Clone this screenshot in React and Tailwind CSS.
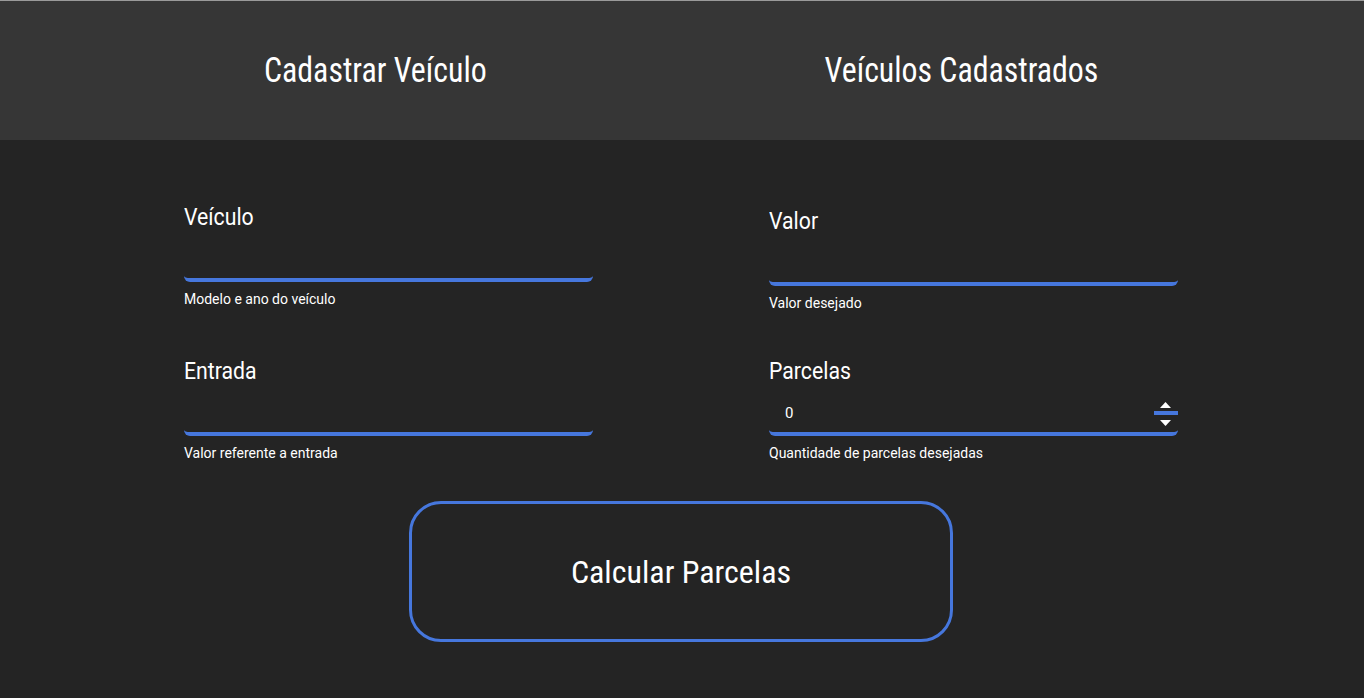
import { useState } from 'react';

const cond = { fontFamily: '"Roboto Condensed", Roboto, "Liberation Sans", sans-serif' };

function Field({ label, helper, value, number, className = '' }) {
  return (
    <div className={`flex flex-col ${className}`}>
      <label className="block text-[24px] leading-[28px] text-white font-[Roboto,sans-serif]">
        <span className="inline-block origin-left scale-x-[0.885]">{label}</span>
      </label>
      <div className="relative h-[51px] rounded-md border-b-4 border-[#4677dd]">
        {number && (
          <>
            <span className="absolute left-4 top-[20px] text-[15px] leading-[16px] text-white font-[Roboto,sans-serif]">{value}</span>
            <svg className="absolute right-0 top-[17px]" width="25" height="26" viewBox="0 0 25 26">
              <path d="M7 6 L12.5 0 L18 6 Z" fill="#fff" />
              <rect x="1" y="9" width="24" height="4" fill="#4677dd" />
              <path d="M7 18 L18 18 L12.5 24 Z" fill="#fff" />
            </svg>
          </>
        )}
      </div>
      <span className="mt-[9px] text-[14px] leading-[16px] text-white font-[Roboto,sans-serif]">{helper}</span>
    </div>
  );
}

export default function App() {
  const [parcelas] = useState(0);

  return (
    <div className="min-h-screen bg-[#242424]">
      <header className="flex h-[140px] items-center border-t border-[#9a9a9a] bg-[#363636] pl-[82px] pt-[2px]">
        <div className="flex w-[586px] justify-center">
          <h1 className="inline-block scale-x-[0.91] text-[35px] text-white" style={cond}>Cadastrar Veículo</h1>
        </div>
        <div className="flex w-[586px] justify-center">
          <h1 className="inline-block scale-x-[0.91] text-[35px] text-white" style={cond}>Veículos Cadastrados</h1>
        </div>
      </header>

      <main className="ml-[184px] w-[994px] pt-[63px]">
        <div className="grid grid-cols-2 gap-x-[176px] gap-y-[46px]">
          <Field label="Veículo" helper="Modelo e ano do veículo" />
          <Field label="Valor" helper="Valor desejado" className="mt-[4px]" />
          <Field label="Entrada" helper="Valor referente a entrada" />
          <Field label="Parcelas" helper="Quantidade de parcelas desejadas" value={parcelas} number />
        </div>

        <div className="mt-[40px] flex justify-center">
          <button className="flex h-[141px] w-[544px] shrink-0 items-center justify-center rounded-[32px] border-[3px] border-[#4677dd] text-[32px] text-white" style={cond}>
            Calcular Parcelas
          </button>
        </div>
      </main>
    </div>
  );
}
